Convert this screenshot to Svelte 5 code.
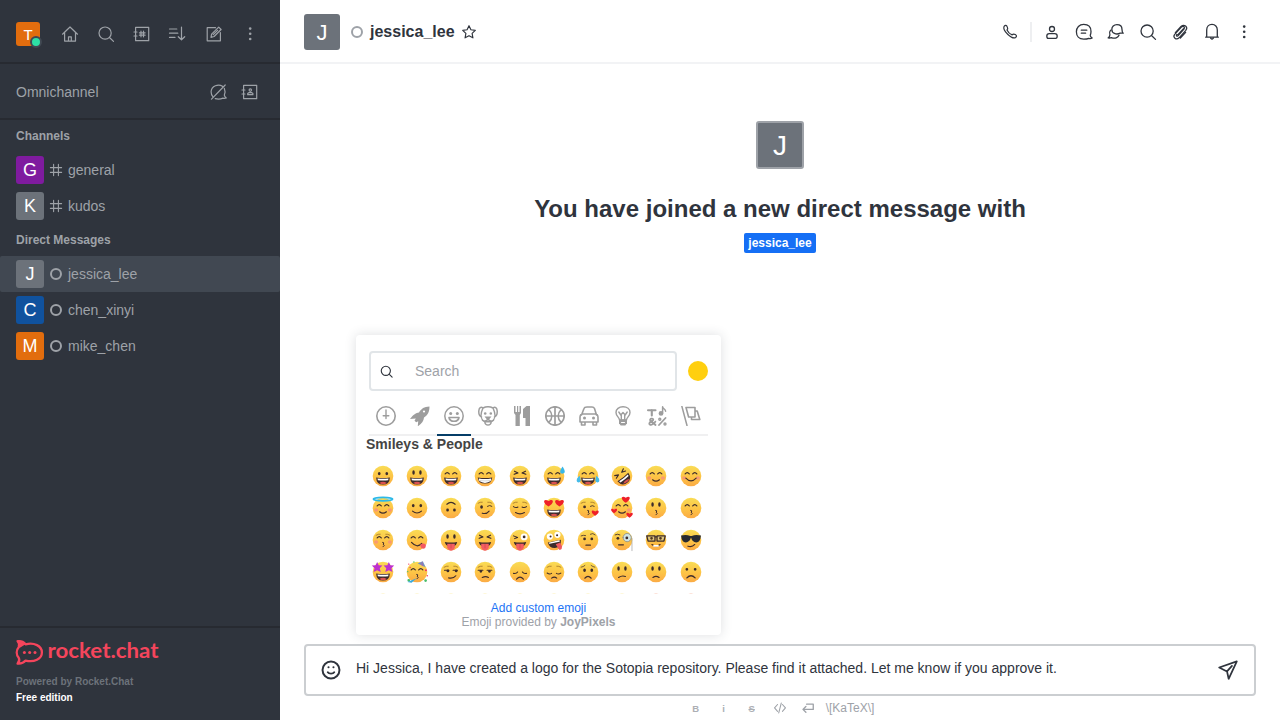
<script>
  const icons = {
    home: 'M2.5 10.2 10 3l7.500 7.200M4.600 8.500v8.600h10.900V8.500M8.500 17v-4.200h2.800V17',
    search: 'M15.200 9.100a6.100 6.100 0 1 1-12.200 0a6.100 6.100 0 1 1 12.200 0M13.500 13.500l4 3.900',
    directory: 'M3.600 3.300h13.100v13.400H3.600zM2 8h3M2 12h3M9 7.200v5.600M11.500 7.200v5.600M7.400 8.800h5.700M7.400 11.200h5.700',
    sort: 'M1.500 5h7.300M1.500 9.200h8.300M1.500 13.400h5.500M13.500 3.200v12.500M10.300 12.700l3.200 3.100 3.200-3.100',
    edit: 'M11.500 3.700H3.200v13.100h13.200V8.500M7 13.300l.6-3.200 7.100-7 2.400 2.400-7 7zM9.200 10.700l4.400-4.400',
    omni: 'M14.500 4.300C10.500 1.700 3.300 3.600 3.100 9.800c0 2 .6 3.600 1.700 4.800M16.300 6.300c1 2.300 1 4.500 0 6.900.2 1.200.8 2 2 2.700-1.300.5-2.300.5-3.300.2-2.500 1.100-5.300 1.200-7.800.5M3.500 17.200 17.200 3',
    contacts: 'M3.600 3.300h13.100v13.400H3.600zM2 8h3M2 12h3M10.300 6.900a1.200 1.200 0 1 1 0 2.400a1.200 1.200 0 1 1 0-2.400M7.700 12.700v-1.100l1.400-1h2.400l1.400 1v1.100z',
    hash: 'M7 3v14M13 3v14M3 7h14M3 13h14',
    star: 'm10 3 2.150 4.500 4.850.650-3.550 3.400.9 4.950L10 14.100 5.650 16.500l.9-4.950L3 8.150l4.850-.650z',
    phone: 'M4.100 4.300c1.200-1.500 2.400-1.100 3.200.6.800 1.600.7 2.100-.3 3 1 2.200 2.800 4 5.100 5 1-1.200 1.700-1.300 3.200-.4 1.500.9 1.500 1.900.3 3C12.500 17.700 2 9 4.100 4.300z',
    user: 'M12.500 7a2.500 2.500 0 1 1-5 0a2.500 2.500 0 1 1 5 0M7.300 11.700h5.400c1.500 0 2.500 1 2.500 2.400 0 1.500-.5 2.300-1.500 2.300H6.300c-1 0-1.500-.8-1.500-2.300 0-1.400 1-2.400 2.500-2.400z',
    thread: 'M9.700 2.400c5 0 7.300 3.200 7.300 7.100 0 1.400-.2 2.600-.8 3.700.1 1.300.7 2.100 2 2.800-1.300.7-2.300.7-3.400.3-1.400.7-3.100.9-5.100.9-4.700 0-7.300-3-7.300-7.400 0-4.300 2.900-7.400 7.300-7.400zM7.300 8.200h5.500M7.300 11.200h4.300',
    discussion: 'M10.900 2.700c3.300 0 5.100 2.100 5.100 4.700 0 1.700.3 3 1.300 3.800l-3.100-.1c-4.100 2.200-8.400-.2-8.400-3.700 0-2.600 2.100-4.700 5.100-4.700zM4.500 8.300c-1.200 1.400-1.200 3.100-.6 4.500 0 1.300-.5 2.300-1.700 3.100 1.300.3 2.200.1 3.200-.3 3.500 1.400 6.700.1 7.600-2.300',
    clip: 'm7.900 12.700 5.600-6.100M5.300 10.600l5.700-6.100c3.200-3 7.500.6 4.800 3.900l-6.700 7.400c-3 2.700-6.700-.5-4.400-3.400l6.700-7.300c1.900-1.600 4 .2 2.600 2l-6 6.700c-1.300 1-2.200-.2-1.200-1.400M15.700 10.400l-5.300 5.700',
    bell: 'M3.700 15.200h12.600M4.700 15V8c0-3.300 2.100-5.600 5.300-5.600s5.300 2.300 5.300 5.600v7M8.700 16.300l1.300.9 1.300-.9',
    smile: 'M17.700 10a7.700 7.700 0 1 1-15.400 0a7.700 7.700 0 1 1 15.400 0M7.100 12.100c1 1.600 4.800 1.600 5.800 0M7.700 7.600h.1M12.200 7.600h.1',
    send: 'M2 7.700 18 2.200 10.600 18 9.100 11.300zM9.100 11.300l4.500-5.100',
    code: 'm6.500 5-4.300 4.900 4.300 4.900M13.500 5l4.300 4.900-4.300 4.900M11.800 3l-3.600 14',
    enter: 'M8 4.500h9.500v7.500H3M7 7.800 2.800 12 7 16.200'
  };
  const channels = [['G', 'general', '#7f1b9f'], ['K', 'kudos', '#6c727a']];
  const people = [['J', 'jessica_lee', '#6c727a'], ['C', 'chen_xinyi', '#10529e'], ['M', 'mike_chen', '#e26d0e']];
  const headerTools = ['user', 'thread', 'discussion', 'search', 'clip', 'bell'];

  const G = '#9d9d9d';
  const D = '#3c2b2b';
  const o = (x, y, rx, ry = rx) => `M${x - rx} ${y}a${rx} ${ry} 0 1 0 ${rx * 2} 0a${rx} ${ry} 0 1 0 ${-rx * 2} 0z`;
  const fill = (d, f = D) => ({ d, f, s: 'none', w: 0 });
  const line = (d, w = 3.6, s = D) => ({ d, f: 'none', s, w });

  const tabs = [
    [line(o(10, 10, 9.200), 1.6, G), line('M10 4v8.500M7.200 9.800h5.600', 1.4, G)],
    [fill('M19.500.5c-5.500.2-8 2-10.500 6-3 .2-5.500 2-9 6.500l5.800-.5-1.300 2.300 1.700 1.500 2-1-.4 5c4.200-3 5.900-5.300 6.200-8.800 4-2.500 5.500-6 5.500-11z', G), fill(o(14, 5.500, 1.1), '#fff')],
    [line(o(10, 10, 9.200), 1.5, G), fill(o(6.700, 7.500, 1.5), G), fill(o(13.300, 7.500, 1.5), G), line('M5 11.500h10c-.8 5-9.200 5-10 0z', 1.6, G)],
    [line('M5 2C3 .2 1 1.500.8 5c-.2 3.500.2 5 2.700 6M15 2c2-1.800 4-.5 4.200 3 .2 3.500-.2 5-2.700 6M5 2c3-1.500 7-1.500 10 0M4.800 2.500C2 8.500 2.800 13.500 6.500 15.500M15.200 2.500c2.800 6 2 11-1.700 13M7 16c-.5 4 6.500 4 6 0', 1.5, G), fill(o(7.200, 7.500, 1.3), G), fill(o(12.800, 7.500, 1.3), G), fill('M6.500 10.500h7L11 13.500H9zM7 14.500h6v2H7z', G), line('M4.500 14.500c2.500 1.500 4 .5 5.500-1.500 1.500 2 3 3 5.500 1.500', 1.4, G)],
    [fill('M2 0h1.500v6H5V0h1.200v6h1.300V0H9v7L7.800 9v11H3.500V9L2 7zM18 0h-3.500l-3.500 3v9h2.500v8H18z', G)],
    [line(o(10, 10, 9.200) + 'M10 1v18M1 10h18M3.800 3.500c4 4 4 9 0 13M16.200 3.500c-4 4-4 9 0 13', 1.7, G)],
    [line('M2.500 9 5 2.500C5.400 1 6.300 1 8 1h5c1.500 0 2 .4 2.500 1.500L17.500 9M4 8h12c2 0 3 1.500 3 3.500V16H1v-4.500C1 9.500 2 8 4 8zM2.500 16v3H6v-3M14 16v3h3.500v-3M6.500 16h7', 1.6, G), fill(o(5.500, 12, 1.5) + o(14.500, 12, 1.5), G)],
    [line('M6.500 14C6.500 11 3 10.500 3 6.500 3 3 6 .8 10 .8s7 2.200 7 5.700c0 4-3.500 4.500-3.500 7.500zM5.800 6l2 3L10 6.500 12.200 9l2-3M8.300 9v4M11.700 9v4', 1.4, G), fill('M6 13.500h8v3.800l-1.700 2.200H7.700L6 17.300z', G), line('M8.500 16.500h3', 1, '#fff')],
    [line('M1 4.200h7.500M4.800 4v5.500', 2.100, G), fill(o(14, 7.400, 2.400), G), line('M15.600 7V.8c0 2 3 2 3 4.500', 1.5, G), line('M8.500 19 3.300 14.500c-1-2 3-2.700 3-.7 0 1.700-4 1.400-4 3.600 0 2.300 4.500 1.800 6-1.800M18.500 12l-6.500 7', 1.8, G), line(o(12.800, 13.200, 1) + o(18, 18, 1), 1.4, G)],
    [line('M.8 0 6 19.500', 1.5, G), line('M5 1.500h9v9.500H7.600zM14.200 5h2l2.600 8.500h-8.300V11', 1.6, G)]
  ];

  // Facial features, drawn on a 64-unit canvas with the head centred at 32,32.
  const eyes = fill(o(21, 25, 4, 4.500) + o(43, 25, 4, 4.500));
  const tall = fill(o(22, 22, 3.600, 6.500) + o(42, 22, 3.600, 6.500));
  const happy = line('M15 26q6-8 12 0M37 26q6-8 12 0', 3.300);
  const squint = line('M16 18l10 5-11 4M48 18l-10 5 11 4', 3.400);
  const closed = line('M13 28q7 5 13 1M38 29q7 4 13-1', 3);
  const brows = line('M12 18q7-4 12-3M40 15q6-1 12 3', 2, '#936322');
  const grin = [fill('M12 36q20 3 40 0q-1 21-20 21T12 36z'), fill('M16 39q16 2 32 0l-1 5q-15 2-30 0z', '#fff'), fill('M21 52q11-7 22 0q-9 7-22 0z', '#d95151')];
  const blush = fill(o(12, 38, 6, 5) + o(52, 38, 6, 5), '#f99a70');
  const smile = line('M22 43q10 8 20 0', 3.300);
  const frown = line('M23 50q9-11 18 0', 3.700);
  const kiss = line('M31 39q8 1 1 5q8 3 0 8', 2.800);
  const tongue = [fill('M14 38q18 3 36 0-3 11-10 12H24q-8-2-10-12z'), fill('M21 43h22v10q-3 10-11 10T21 53z', '#f35e62'), line('M32 45v10', 1.8, '#c94049')];
  const heart = (x, y, z = 1) => fill(`M${x} ${y + 11 * z}c${-24 * z} ${-15 * z} ${-14 * z} ${-29 * z} 0 ${-18 * z}c${14 * z} ${-11 * z} ${24 * z} ${3 * z} 0 ${18 * z}z`, '#ee2028');
  const star = (x) => fill(`M${x} 3l4.500 9 11 1-8 8 3 11-10.500-5-10.500 5 3-11-8-8 11-1z`, '#bd31ce');
  const faces = [
    [eyes, ...grin], [tall, ...grin], [happy, ...grin],
    [happy, fill('M11 36q21 4 42 0-1 18-21 18T11 36z'), fill('M14 39q18 3 36 0v7q-18 12-36 0z', '#fff'), line('M15 45q17 3 34 0', 1.3, '#a6a6a6')],
    [squint, ...grin], [happy, ...grin, fill('M57 4q-10 14-6 19 6 5 12-1 2-5-6-18z', '#39b7e8')],
    [happy, ...grin, fill('M8 31q-12 9-8 18 7 5 11-3zM56 31q12 9 8 18-7 5-11-3z', '#45bbe8')],
    [squint, ...grin], [blush, happy, smile], [blush, happy, line('M17 38q15 16 30 0', 3.300)],
    [blush, happy, smile, line(o(32, 6, 28, 5), 5, '#2cb9e8')], [eyes, line('M19 41q13 11 26 0', 3.300)],
    [fill(o(22, 38, 4, 4.500) + o(42, 38, 4, 4.500)), line('M20 21q12-11 24 0')],
    [brows, fill(o(22, 29, 4, 5)), line('M39 27q7-5 13 0', 2.600), line('M24 47q12 4 20-6', 3.200)], [brows, closed, line('M19 45q13 8 26 0', 3.200)],
    [...grin, heart(16, 18, .88), heart(48, 18, .88)], [brows, fill(o(22, 29, 4, 4)), line('M39 27q6-4 11 0', 2.6), kiss, heart(53, 47, .7)],
    [blush, happy, smile, heart(43, 8, .8), heart(9, 41, .6), heart(54, 53, .65)], [tall, kiss], [happy, kiss],
    [blush, brows, happy, kiss], [happy, line('M16 39q16 18 30 3'), fill('M42 44q15-6 16 5-1 10-9 8-8-2-7-13z', '#f35961')],
    [tall, ...tongue], [squint, ...tongue],
    [line('M13 20l12 5-9 3', 3), fill(o(44, 23, 10), '#fff'), fill(o(44, 23, 4)), ...tongue],
    [fill(o(20, 22, 9) + o(42, 17, 9), '#fff'), fill(o(22, 22, 3) + o(41, 18, 3)), fill('M14 39l38-8q2 22-17 24-16 1-21-16z'), line('M19 41l28-6', 4, '#fff'), fill('M37 44l13-5 5 11q1 12-8 10z', '#ef5760')],
    [line('M12 20q7-3 13-1M39 15q7-5 14 2', 2.300), fill(o(22, 29, 4) + o(43, 29, 4)), line('M26 47h13')],
    [line('M12 17q8-4 14 0', 2.5), fill(o(20, 27, 4)), line('M22 46h14'), fill(o(47, 25, 11), '#cfe5e5'), line(o(47, 25, 12), 2.500, '#8a9294'), fill(o(46, 26, 4)), line('M61 27v36', 2, '#9b9b9b')],
    [fill('M6 20h24v15H9zM35 20h24l-4 15H35z', '#dfc67c'), line('M5 20h24v15H9zM35 20h24l-4 15H35zM29 23h6', 3.800), fill(o(19, 27, 4) + o(45, 27, 4), '#51351e'), line('M20 45q12 9 24 0', 3), line('M26 49h12', 5, '#fff')],
    [fill('M3 19q15-4 27 1h4q12-5 27-1-2 20-14 20-11 0-15-14-4 14-15 14Q5 39 3 19z', '#282b31'), line('M23 50q12 4 20-5', 3.200)],
    [...grin, star(15), star(49)],
    [happy, kiss, fill('M34 7 49 1l8 17z', '#6c95c5'), line('M41 5l7 9M47 3l2 11', 2, '#b363a5'), fill(o(8, 9, 2) + o(58, 27, 3) + o(62, 43, 2) + o(12, 19, 2), '#ef3764'), fill(o(23, 3, 2) + o(8, 56, 4) + o(57, 57, 4) + o(5, 31, 2), '#48bd69'), fill('M4 61l27-11-15 13z', '#35a9dd')],
    [brows, line('M13 27h13M38 27h13', 3), fill(o(23, 29, 4) + o(47, 29, 4)), line('M25 49q14 3 21-6', 3.2)],
    [brows, line('M12 27h14M38 27h14', 3), fill(o(20, 30, 4) + o(45, 30, 4)), line('M24 48q10-5 18 0', 3.2)],
    [line('M13 36q8 2 12-4M39 32q4 6 12 4', 3.2), line('M22 53q10-12 20 0', 3.2)], [brows, line('M12 35q7 5 13 1M39 36q7 4 13-1', 3), line('M25 50q8-6 15 0', 3)],
    [line('M12 18q7-1 11-5M41 13q5 4 11 5', 2), fill(o(22, 27, 4, 5) + o(43, 27, 4, 5)), frown],
    [tall, line('M22 48q10-7 20-3', 3.3)], [tall, line('M23 48q9-7 18 0', 3.3)], [fill(o(20, 24, 4) + o(44, 24, 4)), line('M20 49q12-12 24 0', 3.8)],
    ...Array.from({ length: 10 }, () => [])
  ];
  const tilted = 7;
</script>

{#snippet icon(name, size = 20, width = 1.2)}
  <svg class="icon" width={size} height={size} viewBox="0 0 20 20" stroke-width={width}><path d={icons[name]} /></svg>
{/snippet}
{#snippet kebab()}
  <svg class="icon solid" width="20" height="20" viewBox="0 0 20 20"><circle cx="10.200" cy="4.600" r="1.300" /><circle cx="10.200" cy="9.800" r="1.300" /><circle cx="10.200" cy="15" r="1.300" /></svg>
{/snippet}
{#snippet parts(list)}
  {#each list as p}<path d={p.d} fill={p.f} stroke={p.s} stroke-width={p.w} stroke-linecap="round" stroke-linejoin="round" />{/each}
{/snippet}

<div class="app">
  <aside>
    <div class="toolbar">
      <span class="me">T<i></i></span>
      <div class="tools">
        {#each ['home', 'search', 'directory', 'sort', 'edit'] as name}{@render icon(name)}{/each}
        {@render kebab()}
      </div>
    </div>
    <div class="omni"><span>Omnichannel</span>{@render icon('omni')}{@render icon('contacts')}</div>
    <nav>
      <h4>Channels</h4>
      {#each channels as [letter, name, color]}
        <div class="room"><b style:background={color}>{letter}</b><span class="kind">{@render icon('hash', 16, 1.4)}</span><span>{name}</span></div>
      {/each}
      <h4>Direct Messages</h4>
      {#each people as [letter, name, color], n}
        <div class="room" class:active={n === 0}><b style:background={color}>{letter}</b><span class="kind"><i class="ring"></i></span><span>{name}</span></div>
      {/each}
    </nav>
    <footer>
      <svg class="brand" width="144" height="26" viewBox="0 0 144 26">
        <path d="M1.600 1.300c3.700-.3 6.200.8 8 3 8.600-2.200 16.300 1.700 16.300 8.100 0 6.500-7.700 10.300-16.300 8.200-2 2.300-4.300 3.300-8 2.900 1.800-1.900 2.100-4 1.100-5.800-2.600-3.200-2.600-7.500 0-10.500C3.600 5 3.300 3 1.600 1.300z" fill="none" stroke="#f5455c" stroke-width="2.300" stroke-linejoin="round" />
        <path d="M.5.5C4.600-.1 7.700 1.500 9.500 4.300L3.500 8C4 5.200 2.700 2.700.5.5z" fill="#f5455c" />
        <g fill="#f5455c"><circle cx="8.400" cy="12.400" r="1.500" /><circle cx="13.700" cy="12.400" r="1.500" /><circle cx="19" cy="12.400" r="1.500" /></g>
        <text x="31.500" y="18" textLength="111" lengthAdjust="spacingAndGlyphs">rocket.chat</text>
      </svg>
      <p>Powered by Rocket.Chat</p>
      <p class="edition">Free edition</p>
    </footer>
  </aside>

  <main>
    <header>
      <span class="avatar">J</span><i class="ring"></i><h1>jessica_lee</h1>{@render icon('star', 18, 1.3)}
      <div class="actions">
        {@render icon('phone')}<span class="rule"></span>
        {#each headerTools as name}{@render icon(name, 20, name === 'clip' ? 1.2 : 1.3)}{/each}
        {@render kebab()}
      </div>
    </header>

    <section class="intro">
      <span class="avatar large">J</span>
      <h2>You have joined a new direct message with</h2>
      <strong>jessica_lee</strong>
    </section>

    <div class="composer">
      <div class="field">
        {@render icon('smile', 22, 1.8)}
        <span class="message">Hi Jessica, I have created a logo for the Sotopia repository. Please find it attached. Let me know if you approve it.</span>
        {@render icon('send', 22, 1.6)}
      </div>
      <div class="format">
        <b>B</b><b>i</b><b><s>S</s></b><span>{@render icon('code', 16, 1.5)}</span><span>{@render icon('enter', 16, 1.9)}</span><em>\[KaTeX\]</em>
      </div>
    </div>

    <div class="picker">
      <div class="find"><div class="box">{@render icon('search', 15, 1.5)}<span>Search</span></div><i class="tone"></i></div>
      <div class="tabs">
        {#each tabs as tab, n}
          <span class:current={n === 2}><svg width="20" height="20" viewBox="0 0 20 20">{@render parts(tab)}</svg></span>
        {/each}
      </div>
      <h3>Smileys &amp; People</h3>
      <div class="grid">
        {#each faces as face, n}
          <svg width="22" height="22" viewBox="0 0 64 64">
            <defs><linearGradient id="skin{n}" x1="0" y1="0" x2="0" y2="1"><stop stop-color={n > 47 ? '#f27b50' : '#f9dc55'} /><stop offset=".55" stop-color="#fdc345" /><stop offset="1" stop-color="#fbab45" /></linearGradient></defs>
            <circle cx="32" cy="32" r="30" fill="url(#skin{n})" />
            <g transform={n === tilted ? 'rotate(-38 32 32)' : null}>{@render parts(face)}</g>
          </svg>
        {/each}
      </div>
      <div class="credit"><span class="add">Add custom emoji</span><span>Emoji provided by <b>JoyPixels</b></span></div>
    </div>
  </main>
</div>

<style>
  :global(body) { margin: 0; font-family: "Liberation Sans", Arial, sans-serif; overflow: hidden; }
  * { box-sizing: border-box; }
  h1, h2, h3, h4, p { margin: 0; }
  .app { display: grid; grid-template-columns: 280px 1000px; height: 720px; }
  .icon { display: block; flex: none; fill: none; stroke: currentColor; stroke-linecap: round; stroke-linejoin: round; overflow: visible; }
  .icon.solid { fill: currentColor; stroke: none; }
  aside { display: flex; flex-direction: column; background: #2f343d; color: #9ea2a8; font-size: 14px; }
  .toolbar { height: 64px; display: flex; align-items: center; padding: 6px 20px 0 16px; border-bottom: 2px solid #272a31; }
  .me { position: relative; width: 24px; height: 24px; border-radius: 3px; background: #e26d0e; color: #fff; font-size: 15px; line-height: 25px; text-align: center; }
  .me i { position: absolute; left: 14px; top: 14px; width: 12px; height: 12px; border-radius: 50%; background: #2de0a5; border: 2px solid #414852; }
  .tools { display: flex; gap: 16px; margin-left: 20px; }
  .omni { height: 56px; display: flex; align-items: center; gap: 12px; padding: 2px 20px 0 16px; border-bottom: 2px solid #272a31; }
  .omni span { flex: 1; }
  h4 { height: 32px; line-height: 32px; padding-left: 16px; font-size: 12px; }
  .room { height: 36px; display: flex; align-items: center; padding-left: 16px; border-radius: 2px; }
  .room.active { background: #414852; }
  .room b { width: 28px; height: 28px; border-radius: 3px; color: #fff; font-size: 18px; font-weight: 400; line-height: 29px; text-align: center; }
  .kind { width: 16px; margin: 0 4px; display: flex; justify-content: center; }
  .ring { width: 12px; height: 12px; border: 2px solid #9ea2a8; border-radius: 50%; }
  footer { margin-top: auto; height: 94px; border-top: 2px solid #272a31; padding: 12px 16px 0; font-size: 10px; font-weight: 700; color: #6c727a; }
  .brand { display: block; overflow: visible; }
  .brand text { fill: #f5455c; font: 700 21.5px Lato, sans-serif; }
  footer p { line-height: 16px; margin-top: 8px; }
  footer .edition { margin-top: 0; color: #fff; }
  main { position: relative; display: flex; flex-direction: column; background: #fff; color: #2f343d; }
  header { height: 64px; display: flex; align-items: center; padding: 2px 26px 0 24px; border-bottom: 2px solid #f2f3f5; }
  header .ring { margin: 0 7px 0 11px; }
  h1 { font-size: 16px; margin-right: 5px; }
  .avatar { width: 36px; height: 36px; border-radius: 3px; background: #6c727a; color: #fff; font-size: 22px; line-height: 38px; text-align: center; }
  .actions { margin-left: auto; display: flex; align-items: center; gap: 12px; }
  .rule { width: 2px; height: 20px; background: #eeeff1; margin: 0 -2px; }
  .intro { flex: 1; display: flex; flex-direction: column; align-items: center; padding-top: 57px; }
  .large { width: 48px; height: 48px; border: 2px solid #9ea2a8; font-size: 28px; line-height: 46px; }
  h2 { margin-top: 24px; font-size: 24px; line-height: 32px; }
  strong { margin-top: 8px; padding: 0 4px; border-radius: 2px; background: #156ff5; color: #fff; font-size: 12px; line-height: 20px; }
  .composer { padding: 0 24px; height: 76px; }
  .field { height: 52px; display: flex; align-items: center; padding: 0 15px 0 14px; border: 2px solid #cbced1; border-radius: 4px; }
  .message { flex: 1; padding: 0 0 4px 14px; font-size: 14px; }
  .format { display: flex; align-items: center; justify-content: center; height: 24px; padding-right: 4px; color: #9ea2a8; font-size: 9.5px; }
  .format > * { width: 28px; display: flex; justify-content: center; }
  .format > b { font-weight: 700; opacity: .85; }
  .format em { width: auto; margin-left: 4px; font-size: 12px; font-style: normal; }
  .format > span .icon { width: 14px; height: 14px; }
  .picker { position: absolute; left: 76px; top: 335px; width: 365px; height: 300px; display: flex; flex-direction: column; background: #fff; border-radius: 4px; box-shadow: 0 0 12px #2f343d28; }
  .find { display: flex; align-items: center; gap: 11px; padding: 16px 13px 0; }
  .box { width: 308px; height: 40px; display: flex; align-items: center; border: 2px solid #e1e5e8; border-radius: 4px; padding-left: 8px; }
  .box span { margin-left: 21px; color: #9ea2a8; font-size: 14px; }
  .tone { width: 20px; height: 20px; border-radius: 50%; background: #ffcf0f; }
  .tabs { height: 45px; display: flex; margin: 0 13px; border-bottom: 2px solid #f0f0f1; }
  .tabs span { flex: 1; height: 45px; display: flex; justify-content: center; padding-top: 15px; }
  .tabs .current { border-bottom: 2px solid #053e68; }
  h3 { padding-left: 10px; font-size: 14px; line-height: 17px; color: #444; }
  .grid { height: 141px; overflow: hidden; display: grid; grid-template-columns: repeat(10, 34.200px); grid-auto-rows: 32px; justify-items: center; align-items: center; padding: 7px 0 0 9.800px; align-content: start; }
  .grid svg { overflow: visible; }
  .credit { margin-top: 7px; display: flex; flex-direction: column; align-items: center; font-size: 12px; line-height: 14px; color: #9ea2a8; }
  .add { color: #1d74f5; }
</style>
